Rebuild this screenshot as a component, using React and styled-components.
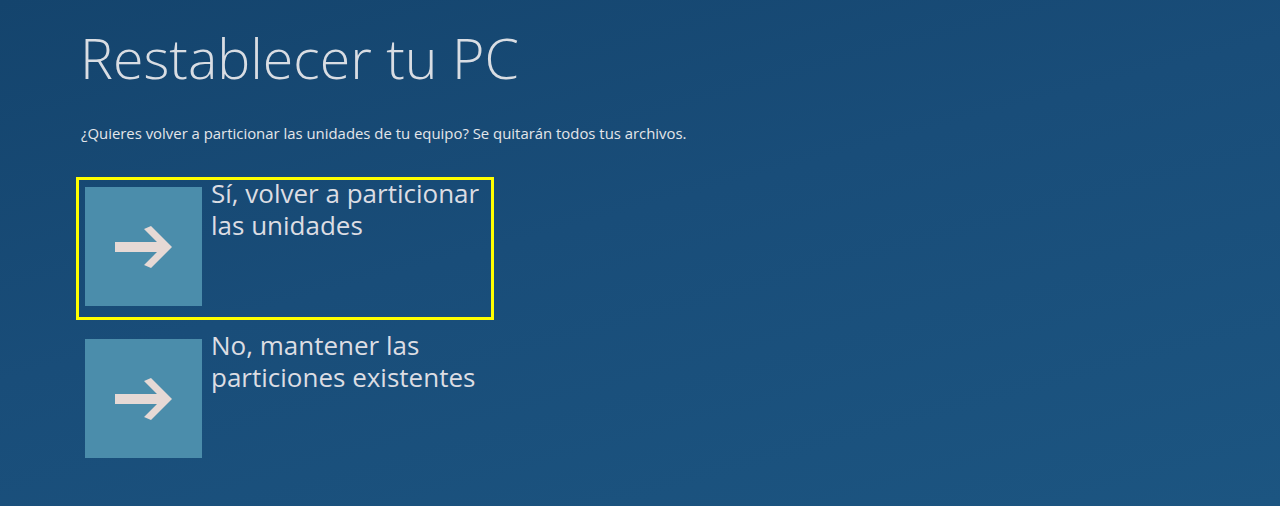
import React from "react";
import styled, { createGlobalStyle } from "styled-components";

const GlobalStyle = createGlobalStyle`
  html, body {
    margin: 0;
    padding: 0;
    height: 100%;
  }
  body {
    background: #184c76;
    font-family: "Open Sans", "Noto Sans", sans-serif;
  }
`;

const options = [
  { id: "yes", label: ["Sí, volver a particionar", "las unidades"], focused: true },
  { id: "no", label: ["No, mantener las", "particiones existentes"], focused: false },
];

const App = () => {
  return (
    <>
      <GlobalStyle />
      <Screen>
        <Title>Restablecer tu PC</Title>
        <Question>
          ¿Quieres volver a particionar las unidades de tu equipo? Se quitarán
          todos tus archivos.
        </Question>
        <OptionList>
          {options.map((opt) => (
            <Option key={opt.id} focused={opt.focused}>
              <Tile>
                <ArrowIcon />
              </Tile>
              <Label>
                {opt.label[0]}
                <br />
                {opt.label[1]}
              </Label>
            </Option>
          ))}
        </OptionList>
      </Screen>
    </>
  );
};

const ArrowIcon = () => (
  <svg width="58" height="42" viewBox="0 0 58 42">
    <path
      d="M0 16 H42 L29 3 L36 0 L57 21 L36 42 L29 39 L42 26 H0 Z"
      fill="#e6d9d5"
    />
  </svg>
);

export default App;

const Screen = styled.div`
  width: 1280px;
  height: 506px;
  box-sizing: border-box;
  padding: 22px 0 0 76px;
  background: linear-gradient(165deg, #14446d 0%, #194d79 45%, #1c5581 100%);
  overflow: hidden;
`;

const Title = styled.h1`
  margin: 0 0 0 4px;
  font-weight: 300;
  font-size: 55.5px;
  line-height: 72px;
  color: #d9dde3;
`;

const Question = styled.p`
  margin: 29px 0 0 5px;
  font-size: 14.9px;
  line-height: 20px;
  color: #e4e6ea;
`;

const OptionList = styled.div`
  display: flex;
  flex-direction: column;
  gap: 9px;
  margin-top: 34px;
`;

const Option = styled.div`
  display: flex;
  align-items: flex-start;
  width: 418px;
  box-sizing: border-box;
  padding: 7px 6px 11px;
  border: 3px solid ${(p) => (p.focused ? "#ffff00" : "transparent")};
`;

const Tile = styled.div`
  flex: none;
  width: 117px;
  height: 119px;
  background: #4b8dab;
  display: flex;
  align-items: center;
  justify-content: center;
`;

const Label = styled.div`
  margin: -10px 0 0 9px;
  font-size: 26px;
  line-height: 32px;
  color: #dcdde3;
`;
